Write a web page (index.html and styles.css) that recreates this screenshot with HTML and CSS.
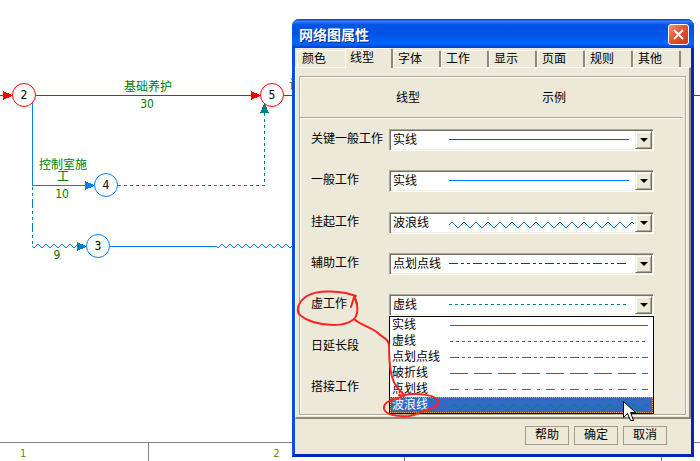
FILE: index.html
```html
<!DOCTYPE html>
<html lang="zh-CN">
<head>
  <meta charset="UTF-8">
  <title>网络图属性</title>
  <link rel="stylesheet" href="styles.css">
</head>
<body>

  <!-- Network diagram -->
  <svg class="diagram" shape-rendering="crispEdges">
    <defs>
      <pattern id="ripple" x="32" y="243" width="8" height="7" patternUnits="userSpaceOnUse">
        <path d="M-2 1L2 5L6 1L10 5" fill="none" stroke="#0080c0" shape-rendering="auto"/>
      </pattern>
    </defs>

    <path d="M0 95.5H4 M36 95.5H252 M284 95.5H294" stroke="#f00"/>
    <line x1="290" x2="100%" y1="95.5" y2="95.5" stroke="#f00"/>
    <path d="M3 91L13 95.5L3 100Z M251 91L261 95.5L251 100Z" fill="#f00"/>

    <path d="M32.5 103V185.5H86 M110 246.5H216" fill="none" stroke="#0080ff"/>
    <path d="M85 181L95 185.5L85 190Z" fill="#0080ff"/>
    <path d="M32.5 187V246" stroke="#0080c0" stroke-dasharray="3 3 3 3 9 3"/>
    <rect x="32" y="243" width="46" height="7" fill="url(#ripple)"/>
    <rect x="216" y="243" width="78" height="7" fill="url(#ripple)"/>
    <path d="M77 242L87 246.5L77 251Z" fill="#0080c0"/>

    <path d="M118 185.5H264.5V112" fill="none" stroke="#008080" stroke-dasharray="3 3"/>

    <g fill="#fff" shape-rendering="auto">
      <circle cx="24" cy="95" r="11.5" stroke="#f00"/>
      <circle cx="272" cy="95" r="11.5" stroke="#f00"/>
      <circle cx="106" cy="185" r="11.5" stroke="#0080ff"/>
      <circle cx="98" cy="246" r="11.5" stroke="#0080ff"/>
    </g>
    <path d="M260 113L264.5 103L269 113Z" fill="#008080"/>

    <g class="node-no">
      <text x="24" y="99">2</text>
      <text x="272" y="99">5</text>
      <text x="106" y="189">4</text>
      <text x="98" y="250">3</text>
    </g>
    <g class="work">
      <text x="148" y="91">基础养护</text>
      <text x="147" y="108">30</text>
      <text x="63" y="169">控制室施<tspan x="63" y="181">工</tspan></text>
      <text x="62" y="198">10</text>
      <text x="57" y="259">9</text>
      <text x="295" y="89">设</text>
    </g>
  </svg>

  <div class="ruler">
    <span>1</span><span>2</span><span>3</span><span></span>
  </div>

  <!-- Properties dialog -->
  <div class="dialog" role="dialog" aria-labelledby="caption">
    <div class="titlebar">
      <h1 id="caption">网络图属性</h1>
      <button class="close" aria-label="关闭">
        <svg width="13" height="13"><path d="M2 2L11 11M11 2L2 11" stroke="#fff" stroke-width="2"/></svg>
      </button>
    </div>

    <div class="tabs" role="tablist">
      <button role="tab">颜色</button>
      <button role="tab" class="active" aria-selected="true">线型</button>
      <button role="tab">字体</button>
      <button role="tab">工作</button>
      <button role="tab">显示</button>
      <button role="tab">页面</button>
      <button role="tab">规则</button>
      <button role="tab">其他</button>
    </div>

    <div class="page">
      <div class="group">
        <div class="heading"><span>线型</span><span>示例</span></div>

        <div class="rows">
          <div class="row">
            <label for="key">关键一般工作</label>
            <div class="combo">
              <select id="key"><option>实线</option></select>
              <svg class="sample"><path d="M0 9.5H180" stroke="#f00"/></svg>
              <span class="arrow"></span>
            </div>
          </div>

          <div class="row">
            <label for="normal">一般工作</label>
            <div class="combo">
              <select id="normal"><option>实线</option></select>
              <svg class="sample"><path d="M0 9.5H180" stroke="#0080ff"/></svg>
              <span class="arrow"></span>
            </div>
          </div>

          <div class="row">
            <label for="suspend">挂起工作</label>
            <div class="combo">
              <select id="suspend"><option>波浪线</option></select>
              <svg class="sample">
                <defs>
                  <pattern id="wave" y="8" width="12" height="8" patternUnits="userSpaceOnUse">
                    <path d="M-3 1L3 7L9 1L15 7" transform="translate(6)" fill="none" stroke="#0080c0"/>
                    <path d="M-3 7L3 1L9 7" fill="none" stroke="#0080c0"/>
                  </pattern>
                </defs>
                <rect y="8" width="185" height="8" fill="url(#wave)"/>
              </svg>
              <span class="arrow"></span>
            </div>
          </div>

          <div class="row">
            <label for="assist">辅助工作</label>
            <div class="combo">
              <select id="assist"><option>点划点线</option></select>
              <svg class="sample"><path d="M0 9.5H180" stroke="#004080" stroke-dasharray="9 3 3 3 3 3"/></svg>
              <span class="arrow"></span>
            </div>
          </div>

          <div class="row">
            <label for="dummy">虚工作</label>
            <div class="combo">
              <select id="dummy"><option>虚线</option></select>
              <svg class="sample"><path d="M0 9.5H180" stroke="#008080" stroke-dasharray="3 3"/></svg>
              <span class="arrow"></span>

              <ul class="list" role="listbox" aria-label="线型">
                <li role="option">实线<svg><path d="M0 8.5H198"/></svg></li>
                <li role="option">虚线<svg><path d="M0 8.5H198" stroke-dasharray="3 3"/></svg></li>
                <li role="option">点划点线<svg><path d="M0 8.5H198" stroke-dasharray="9 3 3 3 3 3"/></svg></li>
                <li role="option">破折线<svg><path d="M0 8.5H198" stroke-dasharray="18 6"/></svg></li>
                <li role="option">点划线<svg><path d="M0 8.5H198" stroke-dasharray="9 6 3 6"/></svg></li>
                <li role="option" class="selected" aria-selected="true">波浪线<svg>
                  <defs>
                    <pattern id="wave-list" y="6" width="12" height="8" patternUnits="userSpaceOnUse">
                      <path d="M-6 1L0 7L6 1L12 7L18 1" transform="translate(-2)"/>
                    </pattern>
                  </defs>
                  <rect y="6" width="198" height="8" fill="url(#wave-list)" stroke="none"/></svg></li>
              </ul>
            </div>
          </div>

          <div class="row"><span>日延长段</span></div>
          <div class="row"><span>搭接工作</span></div>
        </div>
      </div>
    </div>

    <div class="buttons">
      <button>帮助</button>
      <button>确定</button>
      <button>取消</button>
    </div>
  </div>

  <!-- Red pen marks and the mouse pointer -->
  <svg class="marks">
    <g fill="none" stroke="#f22" stroke-width="2" stroke-linejoin="round" stroke-linecap="round">
      <path d="M356 296C343 291 318 289 307 296C299 301 295 310 300 315C307 321 320 325 333 325C346 325 354 321 356 316C359 310 357 303 355 297"/>
      <path d="M351 307L354 297L357 304"/>
      <path d="M354 319C362 326 371 327 378 333C383 338 389 339 389 345C389 362 390 376 395 384C398 390 402 391 404 396L399 395"/>
      <path d="M401 397C391 400 383 402 384 409C386 415 397 417 409 416C417 415 422 411 429 409C438 407 440 402 437 399C431 394 415 393 404 395"/>
    </g>
    <path d="M623.5 401.5V417.5L627.5 413.5L630.5 420.5L633.5 420.5L630.5 412.5H635.5Z" fill="#fff" stroke="#000"/>
  </svg>

</body>
</html>
```

FILE: styles.css
```css
* { box-sizing: border-box; }

body {
  margin: 0;
  min-height: 100vh;
  display: flex;
  flex-direction: column;
  position: relative;
  overflow: hidden;
  background: #fff;
  font: 12px/16px "Liberation Sans", "Noto Sans CJK SC", sans-serif;
  color: #000;
}

button, select { font: inherit; color: inherit; }
button { padding: 0; }

/* diagram */
.diagram { flex: 1; width: 100%; }
.diagram text { text-anchor: middle; font-size: 12px; }
.node-no { font-family: "DejaVu Sans Condensed", "DejaVu Sans", sans-serif; }
.work { fill: #008000; font-family: "DejaVu Sans Condensed", "Noto Sans CJK SC", sans-serif; }

.ruler {
  display: grid;
  grid-template-columns: 149px 256px 257px 1fr;
  height: 19px;
  border-top: 1px solid #808080;
  color: #808000;
  text-align: center;
  font: 11px/22px "DejaVu Sans Condensed", sans-serif;
}
.ruler span { border-right: 1px solid #808080; }
.ruler span:first-child { padding-left: 20px; text-align: left; }
.ruler span:last-child { border: 0; }

/* dialog */
.dialog {
  position: absolute;
  top: 19px;
  left: 292px;
  right: 6px;
  background: #ece9d8;
  border: 3px solid #0a4be0;
  border-top: 0;
  border-right-color: #0026b8;
  border-bottom-color: #0026b8;
  border-radius: 7px 7px 0 0;
}

.titlebar {
  display: flex;
  align-items: center;
  justify-content: space-between;
  height: 29px;
  margin: 0 -3px;
  padding: 2px 5px 0 7px;
  border-radius: 7px 7px 0 0;
  background: linear-gradient(#0040c0, #2b80ff 8%, #0054e3 20%, #0055e8 55%, #0066ff 85%, #0040c8);
}
.titlebar h1 {
  margin: 0;
  font-size: 14px;
  line-height: 20px;
  color: #fff;
  text-shadow: 1px 1px #002a90;
}
.close {
  display: grid;
  place-items: center;
  width: 21px;
  height: 21px;
  border: 1px solid #fff;
  border-radius: 3px;
  background: linear-gradient(135deg, #f09078, #e0502c 50%, #c83c14);
}

.tabs {
  display: grid;
  grid-template-columns: repeat(8, 48px);
  align-items: end;
  height: 19px;
  padding-left: 2px;
}
.tabs button {
  height: 17px;
  padding: 0 0 0 4px;
  text-align: left;
  line-height: 15px;
  background: #ece9d8;
  border: 1px solid #fff;
  border-right: 2px solid #8c887a;
  border-bottom: 0;
  border-radius: 2px 2px 0 0;
}
.tabs button:first-child { border-right: 0; }
.tabs .active {
  position: relative;
  height: 20px;
  margin-bottom: -1px;
}

.page {
  padding: 8px 3px 2px;
  border: 1px solid #fff;
  border-right: 2px solid #8c887a;
  border-bottom: 2px solid #8c887a;
}

.group {
  border: 1px solid #aca899;
  box-shadow: inset 1px 1px #fff, 1px 1px #fff;
}
.heading {
  display: grid;
  grid-template-columns: 146px 1fr;
  padding: 13px 0 11px 96px;
  margin-right: 2px;
  border-bottom: 1px solid #aca899;
  box-shadow: 0 1px #fff;
}

.rows {
  display: grid;
  grid-template-rows: repeat(7, 1fr);
  height: 290px;
  margin: 1px 31px 5px 11px;
}
.row {
  display: grid;
  grid-template-columns: 78px 1fr;
  align-items: center;
}
.row label, .row > span { padding-bottom: 2px; white-space: nowrap; }

.combo {
  position: relative;
  display: grid;
  grid-template-columns: 58px 1fr 18px;
  height: 22px;
  background: #fff;
  border: 1px solid;
  border-color: #aca899 #fff #fff #aca899;
  box-shadow: inset 1px 1px #716f64, inset -1px -1px #f1efe2;
}
.combo select {
  grid-area: 1 / 1 / 2 / 4;
  appearance: none;
  padding: 0 0 0 3px;
  border: 0;
  background: none;
}
.sample {
  grid-area: 1 / 2;
  width: 100%;
  height: 20px;
  margin-left: 1px;
  pointer-events: none;
}
.arrow {
  grid-area: 1 / 3;
  margin: 1px 1px 1px 0;
  display: grid;
  place-items: center;
  background: #ece9d8;
  border: 1px solid;
  border-color: #f1efe2 #716f64 #716f64 #f1efe2;
  box-shadow: inset 1px 1px #fff, inset -1px -1px #aca899;
  pointer-events: none;
}
.arrow::before {
  content: "";
  border: 4px solid transparent;
  border-top-color: #000;
  border-bottom: 0;
}

.list {
  position: absolute;
  z-index: 1;
  top: 21px;
  left: -1px;
  right: -1px;
  margin: 0;
  padding: 0;
  list-style: none;
  background: #fff;
  border: 1px solid #000;
}
.list li {
  display: grid;
  grid-template-columns: 58px 1fr;
  height: 16px;
  padding-left: 2px;
  white-space: nowrap;
}
.list svg {
  width: 100%;
  height: 16px;
  fill: none;
  stroke: #008080;
}
.list .selected {
  background: #316ac5;
  color: #fff;
  outline: 1px dotted #e0a040;
  outline-offset: -1px;
}

.buttons {
  display: flex;
  justify-content: flex-end;
  gap: 5px;
  padding: 7px 24px 9px;
}
.buttons button {
  width: 44px;
  height: 19px;
  line-height: 17px;
  background: #ece9d8;
  border: 1px solid #a89888;
}

.marks {
  position: absolute;
  inset: 0;
  width: 100%;
  height: 100%;
  z-index: 2;
  pointer-events: none;
}
```
